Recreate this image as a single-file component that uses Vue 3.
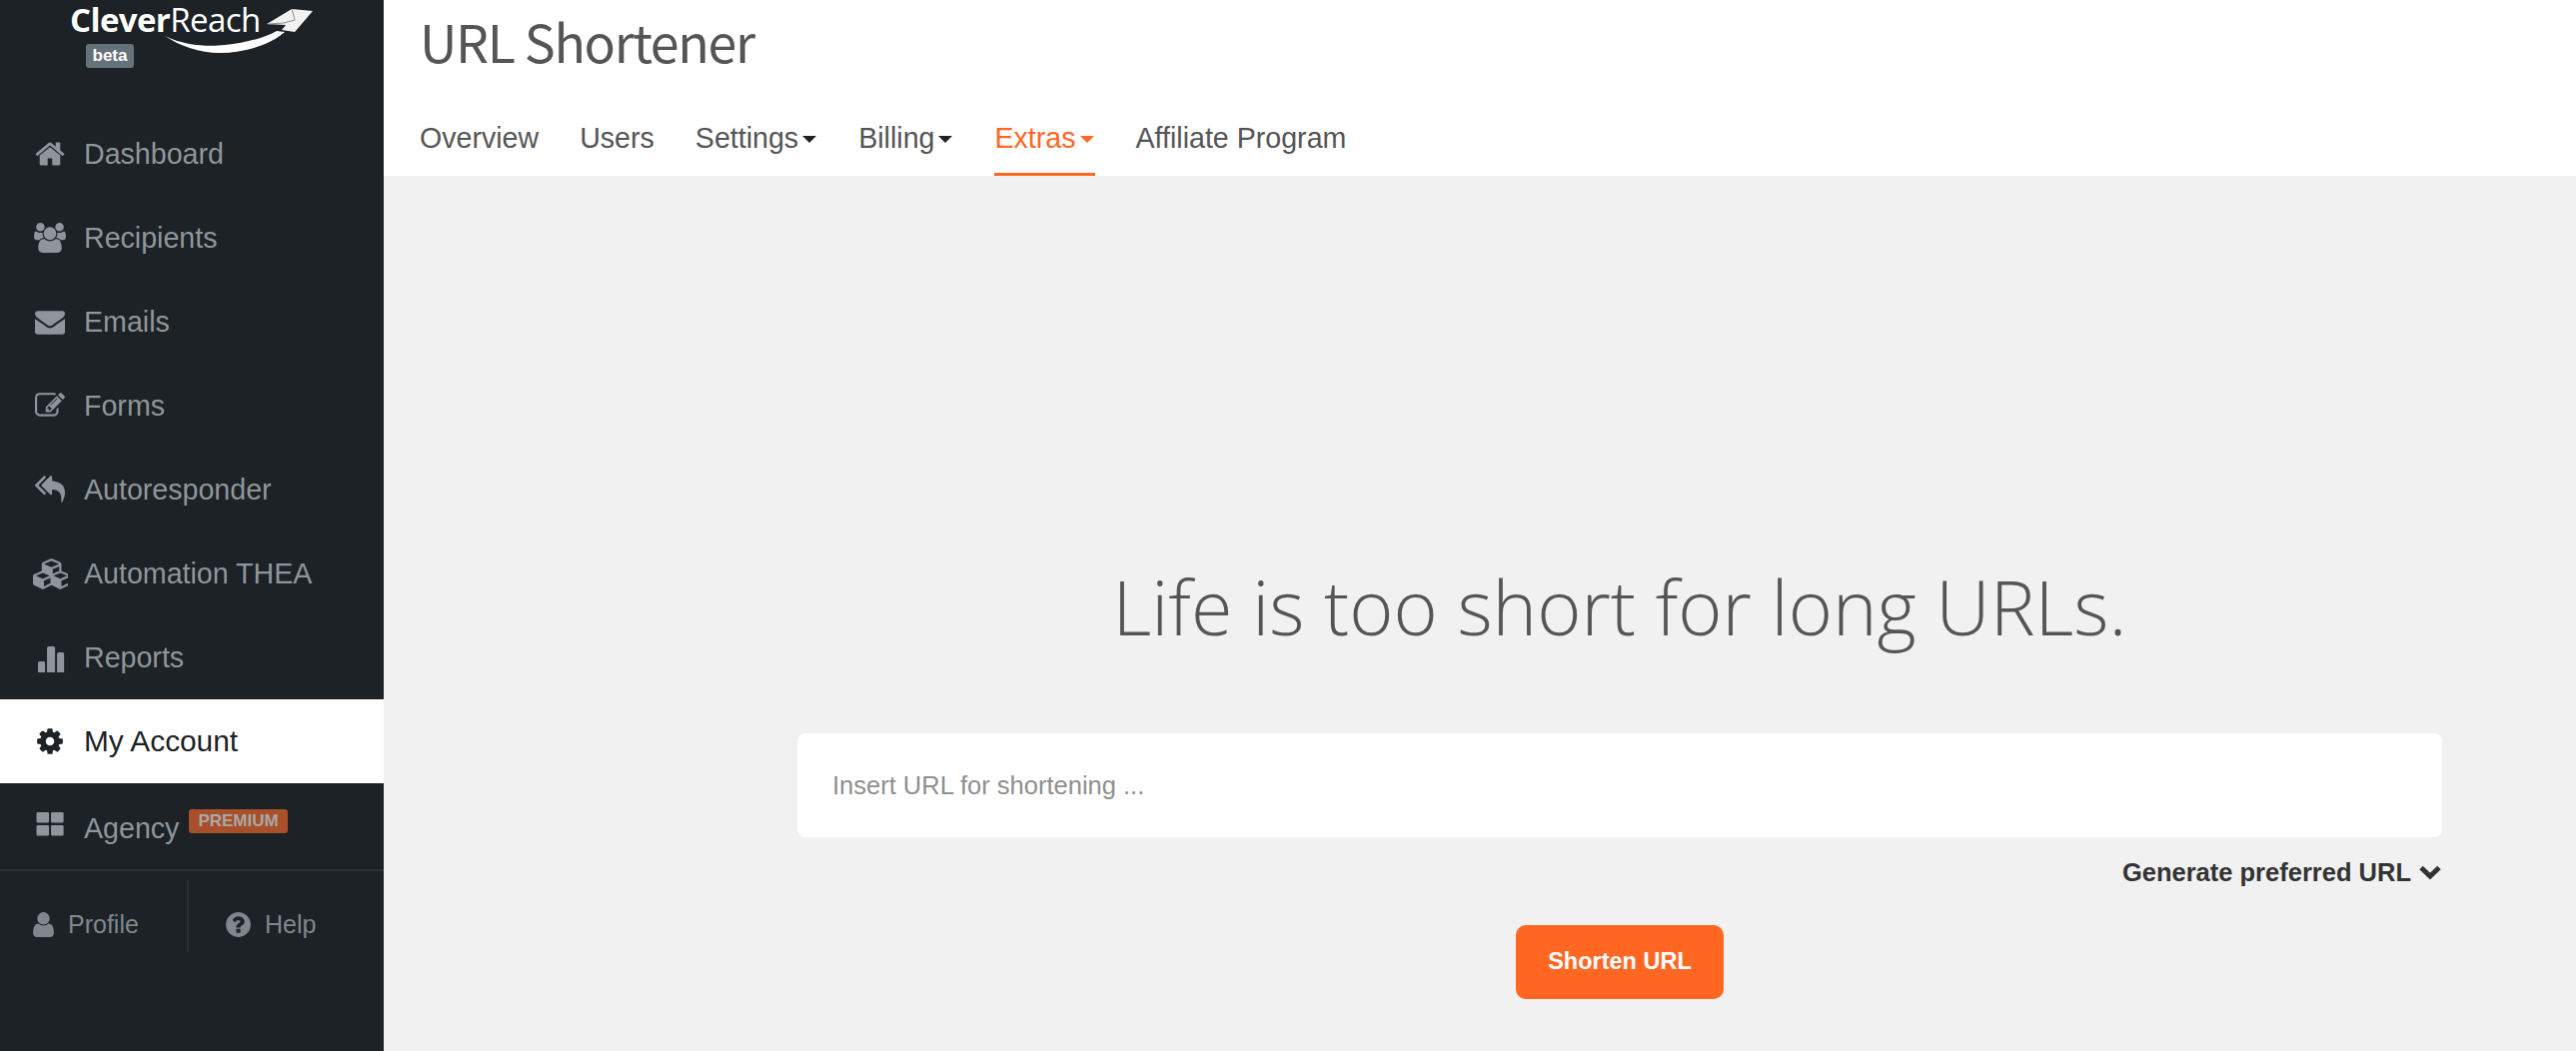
<script setup>
// icon paths, all drawn inside their own viewBox
const navItems = [
  { label: 'Dashboard', w: 1792, size: 32, d: 'M1472 992v480q0 26-19 45t-45 19h-384v-384h-256v384h-384q-26 0-45-19t-19-45v-480q0-1 .5-3t.5-3l575-474 575 474q1 2 1 6zm223-69l-62 74q-8 9-21 11h-3q-13 0-21-7l-692-577-692 577q-12 8-24 7-13-2-21-11l-62-74q-8-10-7-23.5t11-21.5l719-599q32-26 76-26t76 26l244 204v-195q0-14 9-23t23-9h192q14 0 23 9t9 23v408l219 182q10 8 11 21.5t-7 23.5z' },
  { label: 'Recipients', w: 1920, size: 32, d: 'M593 896q-162 5-265 128h-134q-82 0-138-40.5t-56-118.5q0-353 124-353 6 0 43.5 21t97.5 42.5 119 21.5q67 0 133-23-5 37-5 66 0 139 81 256zm1071 637q0 120-73 189.5t-194 69.5h-874q-121 0-194-69.5t-73-189.5q0-53 3.5-103.5t14-109 26.5-108.5 43-97.5 62-81 85.5-53.5 111.5-20q10 0 43 21.5t73 48 107 48 135 21.5 135-21.5 107-48 73-48 43-21.5q61 0 111.5 20t85.5 53.5 62 81 43 97.5 26.5 108.5 14 109 3.5 103.5zm-1024-1277q0 106-75 181t-181 75-181-75-75-181 75-181 181-75 181 75 75 181zm704 384q0 159-112.5 271.5t-271.5 112.5-271.5-112.5-112.5-271.5 112.5-271.5 271.5-112.5 271.5 112.5 112.5 271.5zm576 225q0 78-56 118.5t-138 40.5h-134q-103-123-265-128 81-117 81-256 0-29-5-66 66 23 133 23 59 0 119-21.5t97.5-42.5 43.5-21q124 0 124 353zm-128-609q0 106-75 181t-181 75-181-75-75-181 75-181 181-75 181 75 75 181z' },
  { label: 'Emails', w: 1792, size: 30, d: 'M1792 710v794q0 66-47 113t-113 47h-1472q-66 0-113-47t-47-113v-794q44 49 101 87 362 246 497 345 57 42 92.5 65.5t94.5 48 110 24.5h2q51 0 110-24.5t94.5-48 92.5-65.5q170-123 498-345 57-39 100-87zm0-294q0 79-49 151t-122 123q-376 261-468 325-10 7-42.5 30.5t-54 38-52 32.5-57.5 27-50 9h-2q-23 0-50-9t-57.5-27-52-32.5-54-38-42.5-30.5q-91-64-262-182.5t-205-142.5q-62-42-117-115.5t-55-136.5q0-78 41.5-130t118.5-52h1472q65 0 112.5 47t47.5 113z' },
  { label: 'Forms', w: 1792, size: 30, d: 'M888 1184l116-116-152-152-116 116v56h96v96h56zm440-720q-16-16-33 1l-350 350q-17 17-1 33t33-1l350-350q17-17 1-33zm80 594v190q0 119-84.5 203.5t-203.5 84.5h-832q-119 0-203.5-84.5t-84.5-203.5v-832q0-119 84.5-203.5t203.5-84.5h832q63 0 117 25 15 7 18 23 3 17-9 29l-49 49q-14 14-32 8-23-6-45-6h-832q-66 0-113 47t-47 113v832q0 66 47 113t113 47h832q66 0 113-47t47-113v-126q0-13 9-22l64-64q15-15 35-7t20 29zm-96-738l288 288-672 672h-288v-288zm444 132l-92 92-288-288 92-92q28-28 68-28t68 28l152 152q28 28 28 68t-28 68z' },
  { label: 'Autoresponder', w: 1792, size: 30, d: 'M640 1082v70q0 42-39 59-13 5-25 5-27 0-45-19l-512-512q-19-19-19-45t19-45l512-512q29-31 70-14 39 17 39 59v69l-397 398q-19 19-19 45t19 45zm1152 38q0 58-17 133.5t-38.5 138-48 125-40.5 90.5l-20 40q-8 17-28 17-6 0-9-1-25-8-23-34 43-400-106-565-64-71-170.5-110.5t-267.5-52.5v251q0 42-39 59-13 5-25 5-27 0-45-19l-512-512q-19-19-19-45t19-45l512-512q29-31 70-14 39 17 39 59v262q411 28 599 221 169 173 169 509z' },
  { label: 'Automation THEA', w: 2048, size: 35, d: 'M640 1632l384-192v-314l-384 164v342zm-64-454l404-173-404-173-404 173zm1088 454l384-192v-314l-384 164v342zm-64-454l404-173-404-173-404 173zm-448-293l384-165v-266l-384 164v267zm-64-379l441-189-441-189-441 189zm1088 518v416q0 36-19 67t-52 47l-448 224q-25 14-57 14t-57-14l-448-224q-4-2-7-4-2 2-7 4l-448 224q-25 14-57 14t-57-14l-448-224q-33-16-52-47t-19-67v-416q0-38 21.5-70t56.5-48l434-186v-400q0-38 21.5-70t56.5-48l448-192q23-10 50-10t50 10l448 192q35 16 56.5 48t21.5 70v400l434 186q36 16 57 48t21 70z' },
  { label: 'Reports', w: 1792, size: 30, d: 'M180 1792v-560q0-90 90-90h240q90 0 90 90v560zM720 1792v-1450q0-100 100-100h280q100 0 100 100v1450zM1320 1792v-1090q0-100 100-100h220q100 0 100 100v1090z' },
  { label: 'My Account', w: 1792, size: 30, active: true, d: 'M1152 896q0-106-75-181t-181-75-181 75-75 181 75 181 181 75 181-75 75-181zm512-109v222q0 12-8 23t-20 13l-185 28q-19 54-39 91 35 50 107 138 10 12 10 25t-9 23q-27 37-99 108t-94 71q-12 0-26-9l-138-108q-44 23-91 38-16 136-29 186-7 28-36 28h-222q-14 0-24.5-8.5t-11.5-21.5l-28-184q-49-16-90-37l-141 107q-10 9-25 9-14 0-25-11-126-114-165-168-7-10-7-23 0-12 8-23 15-21 51-66.5t54-70.5q-27-50-41-99l-183-27q-13-2-21-12.5t-8-23.5v-222q0-12 8-23t19-13l186-28q14-46 39-92-40-57-107-138-10-12-10-24 0-10 9-23 26-36 98.5-107.5t94.5-71.5q13 0 26 10l138 107q44-23 91-38 16-136 29-186 7-28 36-28h222q14 0 24.5 8.5t11.5 21.5l28 184q49 16 90 37l142-107q9-9 24-9 13 0 25 10 129 119 165 170 7 8 7 22 0 12-8 23-15 21-51 66.5t-54 70.5q26 50 41 98l183 28q13 2 21 12.5t8 23.5z' },
  { label: 'Agency', w: 1792, size: 30, badge: 'PREMIUM', d: 'M170 120h590q80 0 80 80v470q0 80-80 80h-590q-80 0-80-80v-470q0-80 80-80zM1040 120h590q80 0 80 80v470q0 80-80 80h-590q-80 0-80-80v-470q0-80 80-80zM170 900h590q80 0 80 80v470q0 80-80 80h-590q-80 0-80-80v-470q0-80 80-80zM1040 900h590q80 0 80 80v470q0 80-80 80h-590q-80 0-80-80v-470q0-80 80-80z' }
]

const tabs = [
  { label: 'Overview' },
  { label: 'Users' },
  { label: 'Settings', caret: true },
  { label: 'Billing', caret: true },
  { label: 'Extras', caret: true, active: true },
  { label: 'Affiliate Program' }
]

const userPath = 'M1536 1399q0 109-62.5 187t-150.5 78h-854q-88 0-150.5-78t-62.5-187q0-85 8.5-160.5t31.5-152 58.5-131 94-89 134.5-34.5q131 128 313 128t313-128q76 0 134.5 34.5t94 89 58.5 131 31.5 152 8.5 160.5zm-256-887q0 159-112.5 271.5t-271.5 112.5-271.5-112.5-112.5-271.5 112.5-271.5 271.5-112.5 271.5 112.5 112.5 271.5z'
const helpPath = 'M1024 1376v-192q0-14-9-23t-23-9h-192q-14 0-23 9t-9 23v192q0 14 9 23t23 9h192q14 0 23-9t9-23zm256-672q0-88-55.5-163t-138.5-116-170-41q-243 0-371 213-15 24 8 42l132 100q7 6 19 6 16 0 25-12 53-68 86-92 34-24 86-24 48 0 85.5 26t37.5 59q0 38-20 61t-68 45q-63 28-115.5 86.5t-52.5 125.5v36q0 14 9 23t23 9h192q14 0 23-9t9-23q0-19 21.5-49.5t54.5-49.5q32-18 49-28.5t46-35 44.5-48 28-60.5 12.5-81zm384 192q0 209-103 385.5t-279.5 279.5-385.5 103-385.5-103-279.5-279.5-103-385.5 103-385.5 279.5-279.5 385.5-103 385.5 103 279.5 279.5 103 385.5z'
</script>

<template>
  <div class="page">
    <aside class="sidebar">
      <div class="logo">
        <div class="logo-text"><b>Clever</b>Reach</div>
        <svg class="logo-mark" width="160" height="56" viewBox="0 0 160 56">
          <path d="M5 36C25 46 50 47 65 45C85 43 105 38 117 31L125 32C110 45 85 53 60 53C40 53 20 46 5 36Z" fill="#fff" />
          <path d="M107 24L132 9L153 11L135 32L122 30L126 25Z" fill="#f2f2f2" />
          <path d="M132 9L135 20L124 23L108 24" fill="none" stroke="#8a8f93" stroke-width="1" />
        </svg>
        <span class="beta">beta</span>
      </div>

      <nav class="menu">
        <a v-for="item in navItems" :key="item.label" class="menu-item" :class="{ active: item.active, 'has-badge': item.badge }">
          <span class="menu-icon">
            <svg :width="item.size" :height="item.size" :viewBox="`0 0 ${item.w} 1792`" fill="currentColor">
              <path :d="item.d" />
            </svg>
          </span>
          <span class="menu-label">{{ item.label }}</span>
          <span v-if="item.badge" class="premium">{{ item.badge }}</span>
        </a>
      </nav>

      <div class="foot">
        <a class="foot-link profile">
          <svg width="29" height="29" viewBox="0 0 1792 1792" fill="currentColor"><path :d="userPath" /></svg>
          <span>Profile</span>
        </a>
        <a class="foot-link help">
          <svg width="29" height="29" viewBox="0 0 1792 1792" fill="currentColor"><path :d="helpPath" /></svg>
          <span>Help</span>
        </a>
      </div>
    </aside>

    <div class="content">
      <header class="header">
        <h1 class="title">URL Shortener</h1>
        <nav class="tabs">
          <a v-for="tab in tabs" :key="tab.label" class="tab" :class="{ active: tab.active }">
            {{ tab.label }}<i v-if="tab.caret" class="caret"></i>
          </a>
        </nav>
      </header>

      <main class="main">
        <div class="shortener">
          <h2 class="headline">Life is too short for long URLs.</h2>
          <input class="url-input" type="text" placeholder="Insert URL for shortening ..." />
          <div class="preferred">
            Generate preferred URL
            <svg width="24" height="16" viewBox="0 0 24 16"><path d="M3 3.5L12 12L21 3.5" fill="none" stroke="#333" stroke-width="5" /></svg>
          </div>
          <button class="submit" type="button">Shorten URL</button>
        </div>
      </main>
    </div>
  </div>
</template>

<style>
html, body {
  margin: 0;
  height: 100%;
  overflow: hidden;
}
</style>

<style scoped>
.page {
  display: flex;
  height: 1052px;
  font-family: "Liberation Sans", Arial, sans-serif;
  background: #f1f1f1;
}

.sidebar {
  width: 384px;
  flex-shrink: 0;
  background: #1d2226;
  display: flex;
  flex-direction: column;
}

.logo {
  position: relative;
  height: 112px;
  padding-left: 70px;
  box-sizing: border-box;
}

.logo-text {
  font-family: "Open Sans", sans-serif;
  font-size: 33px;
  line-height: 40px;
  color: #fff;
  letter-spacing: -0.6px;
}

.logo-text b {
  font-weight: 700;
}

.logo-mark {
  position: absolute;
  left: 160px;
  top: 0;
}

.beta {
  display: block;
  width: 48px;
  height: 24px;
  margin: 4px 0 0 16px;
  border-radius: 3px;
  background: #66727a;
  color: #fff;
  font-size: 17px;
  font-weight: 700;
  line-height: 24px;
  text-align: center;
}

.menu-item {
  display: flex;
  align-items: center;
  height: 84px;
  padding-left: 30px;
  color: #8f959a;
  font-size: 28.6px;
}

.menu-item.active {
  background: #fff;
  color: #1d2226;
  font-size: 29.8px;
}

.menu-icon {
  display: flex;
  justify-content: center;
  width: 40px;
  margin-right: 14px;
}

.has-badge .menu-label {
  margin-top: 6px;
}

.premium {
  align-self: flex-start;
  margin: 26px 0 0 10px;
  padding: 0 9px;
  height: 24px;
  border-radius: 3px;
  background: #a94f29;
  color: #a8a8a8;
  font-size: 17px;
  font-weight: 700;
  line-height: 24px;
}

.foot {
  display: flex;
  margin-top: 2px;
  padding-top: 9px;
  border-top: 2px solid #2b3035;
}

.foot-link {
  display: flex;
  align-items: center;
  height: 72px;
  box-sizing: border-box;
  padding-top: 16px;
  color: #7f878d;
  font-size: 25px;
}

.profile {
  width: 189px;
  padding-left: 29px;
  gap: 10px;
  border-right: 2px solid #2b3035;
}

.help {
  padding-left: 35px;
  gap: 12px;
}

.content {
  flex: 1;
  display: flex;
  flex-direction: column;
  min-width: 0;
}

.header {
  height: 176px;
  box-sizing: border-box;
  padding-left: 36px;
  background: #fff;
}

.title {
  margin: 0;
  height: 88px;
  font-family: "Noto Sans CJK SC", "Noto Sans", sans-serif;
  font-size: 52px;
  font-weight: 400;
  letter-spacing: -1.4px;
  line-height: 82px;
  color: #555;
}

.tabs {
  display: flex;
  gap: 41px;
}

.tab {
  display: flex;
  align-items: center;
  height: 88px;
  box-sizing: border-box;
  padding-top: 12px;
  font-size: 28.6px;
  color: #555;
  white-space: nowrap;
}

.tab.active {
  color: #ff6723;
  box-shadow: inset 0 -3px 0 #ff6723;
}

.caret {
  margin: 3px 1px 0 4px;
  border-top: 7px solid #1d2226;
  border-left: 7px solid transparent;
  border-right: 7px solid transparent;
}

.tab.active .caret {
  border-top-color: #ff6723;
}

.main {
  flex: 1;
  padding: 381px 0 0 414px;
}

.shortener {
  width: 1646px;
  display: flex;
  flex-direction: column;
  align-items: center;
}

.headline {
  margin: 0;
  height: 100px;
  font-family: "Open Sans", sans-serif;
  font-size: 75.5px;
  font-weight: 300;
  line-height: 100px;
  color: #555;
}

.url-input {
  width: 100%;
  height: 104px;
  margin-top: 77px;
  padding: 0 35px;
  box-sizing: border-box;
  border: 0;
  border-radius: 8px;
  background: #fff;
  font-family: inherit;
  font-size: 25.5px;
  outline: none;
}

.url-input::placeholder {
  color: #8f8f8f;
  opacity: 1;
}

.preferred {
  align-self: flex-end;
  display: flex;
  align-items: center;
  gap: 7px;
  height: 30px;
  margin-top: 20px;
  color: #333;
  font-size: 25.5px;
  font-weight: 700;
}

.submit {
  width: 208px;
  height: 74px;
  margin-top: 38px;
  padding: 0 0 2px;
  border: 0;
  border-radius: 10px;
  background: #ff6723;
  color: #fff;
  font-family: inherit;
  font-size: 23.5px;
  font-weight: 700;
}
</style>
